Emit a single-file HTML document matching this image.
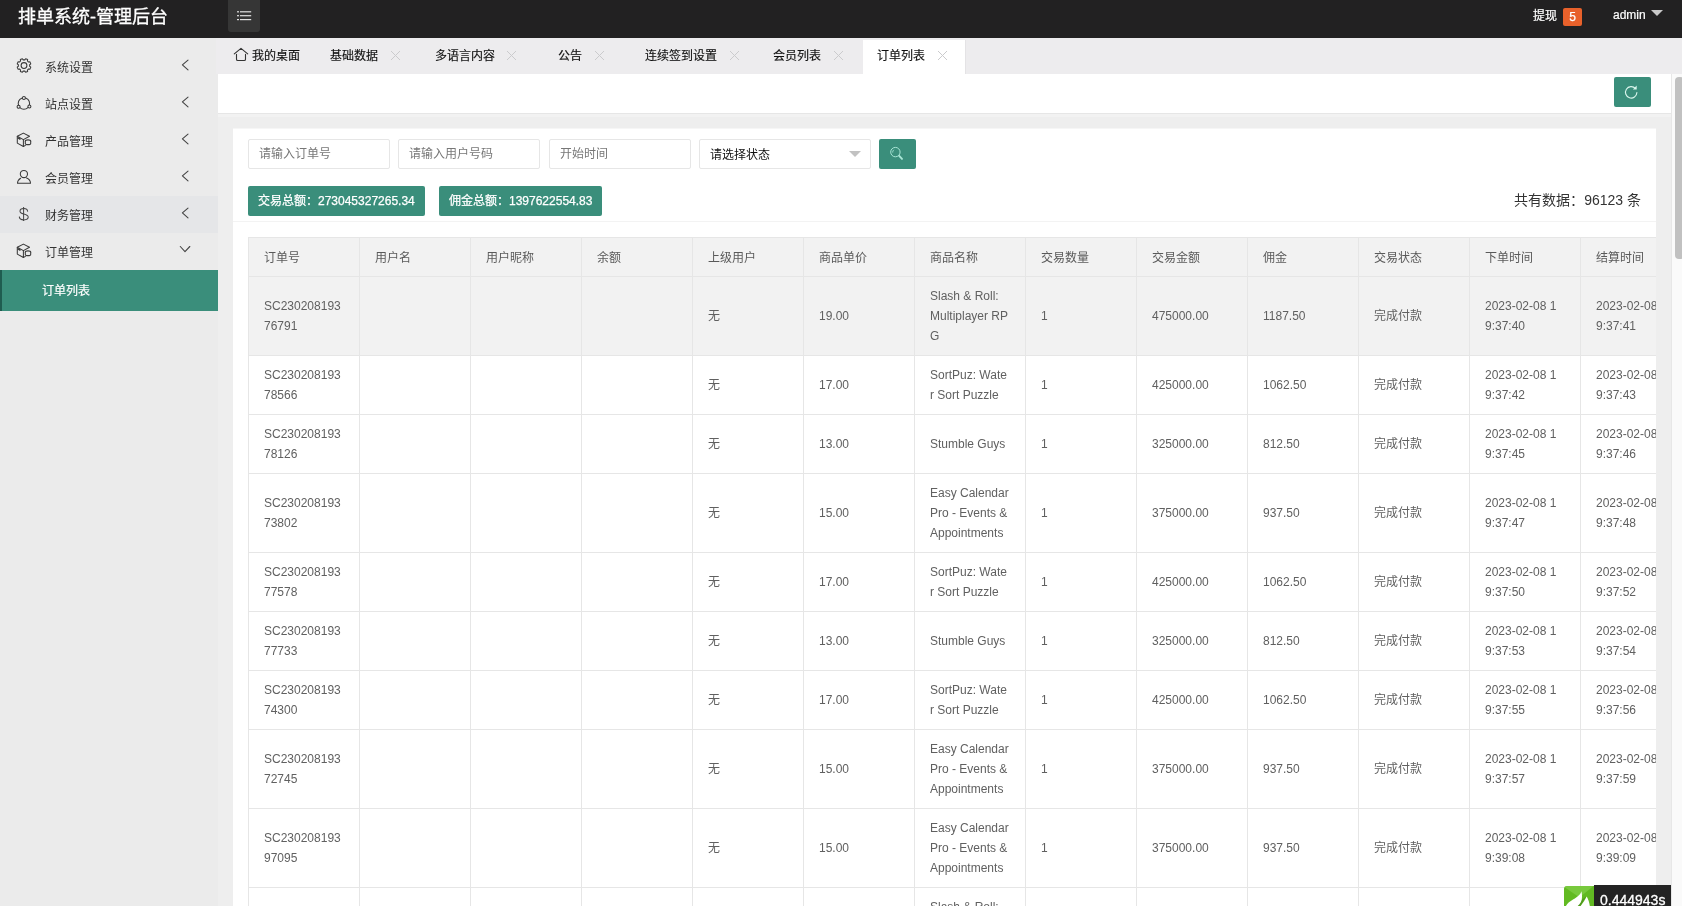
<!DOCTYPE html>
<html lang="zh-CN">
<head>
<meta charset="utf-8">
<title>排单系统-管理后台</title>
<style>
*{box-sizing:border-box;margin:0;padding:0}
html,body{width:1682px;height:906px;overflow:hidden}
body{position:relative;background:#eee;font-family:"Liberation Sans",sans-serif;font-size:12px;color:#333;-webkit-font-smoothing:antialiased}
#root{position:absolute;left:0;top:0;width:1682px;height:906px;overflow:hidden;will-change:transform;background:#eee}
.abs{position:absolute}
/* header */
#hd{position:absolute;left:0;top:0;width:1682px;height:38px;background:#222122}
#logo{-webkit-text-stroke:.3px #fff;position:absolute;left:18px;top:1px;height:32px;line-height:32px;font-size:18px;color:#fff;white-space:nowrap;width:160px}
#tog{position:absolute;left:228px;top:0;width:32px;height:32px;background:#363636;border-radius:0 0 3px 3px}
#tx{-webkit-text-stroke:.2px #fff;position:absolute;left:1533px;top:4px;width:24px;height:24px;line-height:24px;color:#fff;font-size:12px;white-space:nowrap}
#bdg{-webkit-text-stroke:.25px #fff;position:absolute;left:1563px;top:8px;width:19px;height:18px;line-height:18px;background:#e8612b;color:#fff;border-radius:2px;text-align:center;font-size:12px}
#adm{-webkit-text-stroke:.2px #fff;position:absolute;left:1613px;top:3px;height:24px;line-height:24px;color:#fff;font-size:12px}
#tri{position:absolute;left:1651px;top:10px;width:0;height:0;border:6px solid transparent;border-top-color:#c9c9c9;border-bottom-width:0}
/* sidebar */
#sb{position:absolute;left:0;top:38px;width:218px;height:868px;background:#ebebeb}
.mi{position:absolute;left:0;width:218px;height:37px}
.mi .t{position:absolute;left:45px;top:2px;height:37px;line-height:37px;width:60px;white-space:nowrap;color:#333;font-size:12px}
.mi svg{position:absolute}
.mi.hov{background:#e5e6e8}
#sub{position:absolute;left:0;top:232px;width:218px;height:41px;background:#3a8e7b;border-left:2px solid #1f5c50}
#sub span{-webkit-text-stroke:.2px #fff;position:absolute;left:40px;top:1px;line-height:41px;color:#fff;font-size:12px;white-space:nowrap;width:60px}
/* tabs */
#tabs{position:absolute;left:218px;top:38px;width:1464px;height:36px;background:#edecee;box-shadow:-2px 0 0 #edecee}
.tb{-webkit-text-stroke:.15px #111;position:absolute;top:2px;height:34px;line-height:32px;font-size:12px;color:#111;white-space:nowrap}
.tb .x{position:absolute;top:12px}
#act{position:absolute;left:645px;top:2px;width:103px;height:34px;background:#fff;border-right:1px solid #e4e3e5}
/* nav strip */
#nav{position:absolute;left:218px;top:74px;width:1453px;height:40px;background:#fff;border-bottom:1px solid #e6e6e6}#nsh{position:absolute;left:218px;top:114px;width:1453px;height:3px;background:#f2f2f2}
.gbtn{-webkit-text-stroke:.25px #fff;position:absolute;background:#3a8e7b;border-radius:2px;color:#fff;font-size:12px;height:30px;line-height:30px;white-space:nowrap;overflow:hidden}
/* scrollbar */
#sc{position:absolute;left:1671px;top:74px;width:11px;height:832px;background:#fafafa;border-left:1px solid #e7e7e7}
#th{position:absolute;left:1675px;top:77px;width:9px;height:182px;background:#c1c1c1;border-radius:4px}
/* card */
#card{position:absolute;left:233px;top:128px;width:1423px;height:790px;background:#fff;overflow:hidden;border-top:1px solid #f6f6f6}
.inp{position:absolute;top:10px;height:30px;border:1px solid #e6e6e6;border-radius:2px;background:#fff;line-height:28px;padding-left:10px;font-size:12px;color:#777;white-space:nowrap;overflow:hidden}
#hr{position:absolute;left:0;top:92px;width:1423px;height:1px;background:#f3f3f3}
#tot{position:absolute;right:15px;top:61px;width:140px;text-align:right;font-size:14px;line-height:20px;color:#333;white-space:nowrap}
table{position:absolute;left:15px;top:108px;border-collapse:collapse;table-layout:fixed;width:1555px}
th,td{width:111px;border:1px solid #e6e6e6;padding:9px 15px;font-size:12px;line-height:20px;font-weight:normal;text-align:left;color:#606060;white-space:nowrap;vertical-align:middle;overflow:hidden}
th{background:#f2f2f2;color:#5a5a5a;padding:10px 15px 8px}
tr.h td{background:#f2f2f2}
/* trace */
#tp{-webkit-text-stroke:.3px #fff;position:absolute;left:1594px;top:885px;width:77px;height:30px;background:#232323;color:#fff;font-size:14px;line-height:30px;padding-left:6px;white-space:nowrap}
#tpl{position:absolute;left:1564px;top:886px;width:30px;height:30px}
</style>
</head>
<body>
<div id="root">
<div id="hd">
  <div id="logo">排单系统-管理后台</div>
  <div id="tog"><svg width="32" height="32" viewBox="0 0 32 32"><g fill="#e0e0e0"><rect x="9" y="11.2" width="2" height="1.2"/><rect x="12" y="11.2" width="11.2" height="1.2"/><rect x="9" y="15.1" width="2" height="1.2"/><rect x="12" y="15.1" width="11.2" height="1.2"/><rect x="9" y="19" width="2" height="1.2"/><rect x="12" y="19" width="11.2" height="1.2"/></g></svg></div>
  <div id="tx">提现</div><div id="bdg">5</div>
  <div id="adm">admin</div><div id="tri"></div>
</div>
<div id="sb">
  <div class="mi" style="top:10px"><svg style="left:16px;top:9px" width="16" height="17" viewBox="0 0 16 17"><path d="M8.80 2.86 L9.63 1.69 L11.66 2.53 L11.42 3.94 L12.56 5.08 L13.97 4.84 L14.81 6.87 L13.64 7.70 L13.64 9.30 L14.81 10.13 L13.97 12.16 L12.56 11.92 L11.42 13.06 L11.66 14.47 L9.63 15.31 L8.80 14.14 L7.20 14.14 L6.37 15.31 L4.34 14.47 L4.58 13.06 L3.44 11.92 L2.03 12.16 L1.19 10.13 L2.36 9.30 L2.36 7.70 L1.19 6.87 L2.03 4.84 L3.44 5.08 L4.58 3.94 L4.34 2.53 L6.37 1.69 L7.20 2.86Z" fill="none" stroke="#3a3a3a" stroke-width="1.05" stroke-linejoin="round" stroke-linecap="round"/><circle cx="8" cy="8.5" r="2.9" fill="none" stroke="#3a3a3a" stroke-width="1.05" stroke-linejoin="round" stroke-linecap="round"/></svg><span class="t">系统设置</span><svg style="left:181px;top:11px" width="8" height="12" viewBox="0 0 8 12"><path d="M7 1.1L1.4 5.9L7 10.8" fill="none" stroke="#444" stroke-width="1.1" stroke-linecap="round" stroke-linejoin="round"/></svg></div>
  <div class="mi" style="top:47px"><svg style="left:16px;top:10px" width="16" height="16" viewBox="0 0 16 16.0"><circle cx="7.9" cy="8.5" r="5.7" fill="none" stroke="#3a3a3a" stroke-width="1.05" stroke-linejoin="round" stroke-linecap="round"/><circle cx="7.9" cy="2.9" r="1.5" fill="#ebebeb" stroke="#3a3a3a" stroke-width="1.05"/><circle cx="2.6" cy="11.7" r="1.5" fill="#ebebeb" stroke="#3a3a3a" stroke-width="1.05"/><circle cx="13.4" cy="11.5" r="1.5" fill="#ebebeb" stroke="#3a3a3a" stroke-width="1.05"/></svg><span class="t">站点设置</span><svg style="left:181px;top:11px" width="8" height="12" viewBox="0 0 8 12"><path d="M7 1.1L1.4 5.9L7 10.8" fill="none" stroke="#444" stroke-width="1.1" stroke-linecap="round" stroke-linejoin="round"/></svg></div>
  <div class="mi" style="top:84px"><svg style="left:16px;top:10px" width="16" height="16" viewBox="0 0 16 16"><path d="M7.4 1.1L13.5 4.3L7.4 7.6L1.3 4.3Z" fill="none" stroke="#3a3a3a" stroke-width="1.05" stroke-linejoin="round" stroke-linecap="round"/><path d="M1.3 4.3V11.1L7.4 14.5V7.6" fill="none" stroke="#3a3a3a" stroke-width="1.05" stroke-linejoin="round" stroke-linecap="round"/><path d="M1.6 5.6L4.5 7.4" fill="none" stroke="#3a3a3a" stroke-width="1.6"/><path d="M7.4 14.5L9.4 13.4" fill="none" stroke="#3a3a3a" stroke-width="1.05" stroke-linejoin="round" stroke-linecap="round"/><ellipse cx="12" cy="9.1" rx="2.7" ry="1.25" fill="#ebebeb" stroke="#3a3a3a" stroke-width="1.05"/><path d="M9.3 9.1V11.4A2.7 1.25 0 0 0 14.7 11.4V9.1" fill="#ebebeb" stroke="#3a3a3a" stroke-width="1.05"/></svg><span class="t">产品管理</span><svg style="left:181px;top:11px" width="8" height="12" viewBox="0 0 8 12"><path d="M7 1.1L1.4 5.9L7 10.8" fill="none" stroke="#444" stroke-width="1.1" stroke-linecap="round" stroke-linejoin="round"/></svg></div>
  <div class="mi" style="top:121px"><svg style="left:16px;top:10px" width="16" height="16" viewBox="0 0 16 16"><circle cx="7.9" cy="5" r="3.6" fill="none" stroke="#3a3a3a" stroke-width="1.05" stroke-linejoin="round" stroke-linecap="round"/><path d="M4.6 9.2C2.6 10.4 1.5 12.2 1.5 14.3H14.5C14.5 12 13.2 10 10.6 8.9" fill="none" stroke="#3a3a3a" stroke-width="1.05" stroke-linejoin="round" stroke-linecap="round"/></svg><span class="t">会员管理</span><svg style="left:181px;top:11px" width="8" height="12" viewBox="0 0 8 12"><path d="M7 1.1L1.4 5.9L7 10.8" fill="none" stroke="#444" stroke-width="1.1" stroke-linecap="round" stroke-linejoin="round"/></svg></div>
  <div class="mi hov" style="top:158px"><svg style="left:16px;top:10px" width="16" height="16" viewBox="0 0 16 16"><path d="M7.6 1V15" fill="none" stroke="#444" stroke-width="1"/><path d="M11.6 5.2C11.4 3.4 9.8 2.4 7.8 2.4C5.6 2.4 4 3.5 4 5.2C4 6.9 5.6 7.5 7.8 8C10.2 8.6 12.2 9.2 12.2 11.1C12.2 12.9 10.3 13.9 7.8 13.9C5.4 13.9 3.5 12.8 3.3 10.9" fill="none" stroke="#444" stroke-width="1.05" stroke-linecap="round"/></svg><span class="t">财务管理</span><svg style="left:181px;top:11px" width="8" height="12" viewBox="0 0 8 12"><path d="M7 1.1L1.4 5.9L7 10.8" fill="none" stroke="#444" stroke-width="1.1" stroke-linecap="round" stroke-linejoin="round"/></svg></div>
  <div class="mi" style="top:195px"><svg style="left:16px;top:10px" width="16" height="16" viewBox="0 0 16 16"><path d="M7.4 1.1L13.5 4.3L7.4 7.6L1.3 4.3Z" fill="none" stroke="#3a3a3a" stroke-width="1.05" stroke-linejoin="round" stroke-linecap="round"/><path d="M1.3 4.3V11.1L7.4 14.5V7.6" fill="none" stroke="#3a3a3a" stroke-width="1.05" stroke-linejoin="round" stroke-linecap="round"/><path d="M1.6 5.6L4.5 7.4" fill="none" stroke="#3a3a3a" stroke-width="1.6"/><path d="M7.4 14.5L9.4 13.4" fill="none" stroke="#3a3a3a" stroke-width="1.05" stroke-linejoin="round" stroke-linecap="round"/><ellipse cx="12" cy="9.1" rx="2.7" ry="1.25" fill="#ebebeb" stroke="#3a3a3a" stroke-width="1.05"/><path d="M9.3 9.1V11.4A2.7 1.25 0 0 0 14.7 11.4V9.1" fill="#ebebeb" stroke="#3a3a3a" stroke-width="1.05"/></svg><span class="t">订单管理</span><svg style="left:179px;top:12px" width="12" height="8" viewBox="0 0 12 8"><path d="M1.3 1.5L6 6.6L10.8 1.5" fill="none" stroke="#444" stroke-width="1.1" stroke-linecap="round" stroke-linejoin="round"/></svg></div>
  <div id="sub"><span>订单列表</span></div>
</div>
<div id="tabs">
  <div id="act"></div>
  <svg class="abs" style="left:14.5px;top:9px" width="16" height="15" viewBox="0 0 16 15"><path d="M1.3 6.9L8 1.3L14.7 6.9" fill="none" stroke="#333" stroke-width="1.1" stroke-linecap="round" stroke-linejoin="round"/><path d="M3.5 7.4V12.2Q3.5 13.5 4.8 13.5H11.2Q12.5 13.5 12.5 12.2V7.4" fill="none" stroke="#333" stroke-width="1.1" stroke-linecap="round"/></svg>
  <div class="tb" style="left:34px;width:50px">我的桌面</div><div class="tb" style="left:112px;width:50px">基础数据</div><svg class="abs" style="left:172px;top:12px" width="11" height="11" viewBox="0 0 11 11"><path d="M1 1L10 10M10 1L1 10" stroke="#cbcbcd" stroke-width="1" fill="none"/></svg><div class="tb" style="left:217px;width:62px">多语言内容</div><svg class="abs" style="left:288px;top:12px" width="11" height="11" viewBox="0 0 11 11"><path d="M1 1L10 10M10 1L1 10" stroke="#cbcbcd" stroke-width="1" fill="none"/></svg><div class="tb" style="left:340px;width:26px">公告</div><svg class="abs" style="left:376px;top:12px" width="11" height="11" viewBox="0 0 11 11"><path d="M1 1L10 10M10 1L1 10" stroke="#cbcbcd" stroke-width="1" fill="none"/></svg><div class="tb" style="left:427px;width:74px">连续签到设置</div><svg class="abs" style="left:511px;top:12px" width="11" height="11" viewBox="0 0 11 11"><path d="M1 1L10 10M10 1L1 10" stroke="#cbcbcd" stroke-width="1" fill="none"/></svg><div class="tb" style="left:555px;width:50px">会员列表</div><svg class="abs" style="left:615px;top:12px" width="11" height="11" viewBox="0 0 11 11"><path d="M1 1L10 10M10 1L1 10" stroke="#cbcbcd" stroke-width="1" fill="none"/></svg><div class="tb" style="left:659px;width:50px">订单列表</div><svg class="abs" style="left:719px;top:12px" width="11" height="11" viewBox="0 0 11 11"><path d="M1 1L10 10M10 1L1 10" stroke="#cbcbcd" stroke-width="1" fill="none"/></svg>
</div>
<div id="nav"><div class="gbtn" style="left:1396px;top:3px;width:37px"><svg class="abs" style="left:8px;top:6px" width="18" height="18" viewBox="0 0 18 18"><path d="M13.4 5.5A5.7 5.7 0 1 0 14.9 9.6" fill="none" stroke="#d9f5ec" stroke-width="1.15" stroke-linecap="round"/><path d="M14.7 2.6V6.4H10.9Z" fill="#d9f5ec"/></svg></div></div>
<div id="nsh"></div><div id="sc"></div><div id="th"></div>
<div id="card">
  <div class="inp" style="left:15px;width:142px">请输入订单号</div>
  <div class="inp" style="left:165px;width:142px">请输入用户号码</div>
  <div class="inp" style="left:316px;width:142px">开始时间</div>
  <div class="inp" style="left:466px;width:172px;color:#111;line-height:30px">请选择状态<i class="abs" style="right:9px;top:11px;width:0;height:0;border:6px solid transparent;border-top-color:#c2c2c2;border-bottom-width:0"></i></div>
  <div class="gbtn" style="left:646px;top:10px;width:37px"><svg class="abs" style="left:9px;top:6px" width="18" height="18" viewBox="0 0 18 18"><circle cx="7.4" cy="7.1" r="4.7" fill="none" stroke="#a9e6d6" stroke-width="1"/><path d="M4.7 7.6A2.8 2.8 0 0 1 5.9 4.8" fill="none" stroke="#a9e6d6" stroke-width="0.8"/><path d="M11.2 10.9L14 13.9" fill="none" stroke="#a9e6d6" stroke-width="1.9" stroke-linecap="round"/></svg></div>
  <div class="gbtn" style="left:15px;top:57px;width:177px;padding-left:10px">交易总额：273045327265.34</div>
  <div class="gbtn" style="left:206px;top:57px;width:163px;padding-left:10px">佣金总额：1397622554.83</div>
  <div id="tot">共有数据：96123 条</div>
  <div id="hr"></div>
  <table>
  <tr><th>订单号</th><th>用户名</th><th>用户昵称</th><th>余额</th><th>上级用户</th><th>商品单价</th><th>商品名称</th><th>交易数量</th><th>交易金额</th><th>佣金</th><th>交易状态</th><th>下单时间</th><th>结算时间</th><th></th></tr>
  <tr class="h"><td>SC230208193<br>76791</td><td></td><td></td><td></td><td>无</td><td>19.00</td><td>Slash &amp; Roll:<br>Multiplayer RP<br>G</td><td>1</td><td>475000.00</td><td>1187.50</td><td>完成付款</td><td>2023-02-08 1<br>9:37:40</td><td>2023-02-08 1<br>9:37:41</td><td></td></tr>
  <tr><td>SC230208193<br>78566</td><td></td><td></td><td></td><td>无</td><td>17.00</td><td>SortPuz: Wate<br>r Sort Puzzle</td><td>1</td><td>425000.00</td><td>1062.50</td><td>完成付款</td><td>2023-02-08 1<br>9:37:42</td><td>2023-02-08 1<br>9:37:43</td><td></td></tr>
  <tr><td>SC230208193<br>78126</td><td></td><td></td><td></td><td>无</td><td>13.00</td><td>Stumble Guys</td><td>1</td><td>325000.00</td><td>812.50</td><td>完成付款</td><td>2023-02-08 1<br>9:37:45</td><td>2023-02-08 1<br>9:37:46</td><td></td></tr>
  <tr><td>SC230208193<br>73802</td><td></td><td></td><td></td><td>无</td><td>15.00</td><td>Easy Calendar<br>Pro - Events &amp;<br>Appointments</td><td>1</td><td>375000.00</td><td>937.50</td><td>完成付款</td><td>2023-02-08 1<br>9:37:47</td><td>2023-02-08 1<br>9:37:48</td><td></td></tr>
  <tr><td>SC230208193<br>77578</td><td></td><td></td><td></td><td>无</td><td>17.00</td><td>SortPuz: Wate<br>r Sort Puzzle</td><td>1</td><td>425000.00</td><td>1062.50</td><td>完成付款</td><td>2023-02-08 1<br>9:37:50</td><td>2023-02-08 1<br>9:37:52</td><td></td></tr>
  <tr><td>SC230208193<br>77733</td><td></td><td></td><td></td><td>无</td><td>13.00</td><td>Stumble Guys</td><td>1</td><td>325000.00</td><td>812.50</td><td>完成付款</td><td>2023-02-08 1<br>9:37:53</td><td>2023-02-08 1<br>9:37:54</td><td></td></tr>
  <tr><td>SC230208193<br>74300</td><td></td><td></td><td></td><td>无</td><td>17.00</td><td>SortPuz: Wate<br>r Sort Puzzle</td><td>1</td><td>425000.00</td><td>1062.50</td><td>完成付款</td><td>2023-02-08 1<br>9:37:55</td><td>2023-02-08 1<br>9:37:56</td><td></td></tr>
  <tr><td>SC230208193<br>72745</td><td></td><td></td><td></td><td>无</td><td>15.00</td><td>Easy Calendar<br>Pro - Events &amp;<br>Appointments</td><td>1</td><td>375000.00</td><td>937.50</td><td>完成付款</td><td>2023-02-08 1<br>9:37:57</td><td>2023-02-08 1<br>9:37:59</td><td></td></tr>
  <tr><td>SC230208193<br>97095</td><td></td><td></td><td></td><td>无</td><td>15.00</td><td>Easy Calendar<br>Pro - Events &amp;<br>Appointments</td><td>1</td><td>375000.00</td><td>937.50</td><td>完成付款</td><td>2023-02-08 1<br>9:39:08</td><td>2023-02-08 1<br>9:39:09</td><td></td></tr>
  <tr><td>SC230208193<br>90385</td><td></td><td></td><td></td><td>无</td><td>19.00</td><td>Slash &amp; Roll:<br>Multiplayer RP<br>G</td><td>1</td><td>475000.00</td><td>1187.50</td><td>完成付款</td><td>2023-02-08 1<br>9:39:10</td><td>2023-02-08 1<br>9:39:11</td><td></td></tr>
  </table>
</div>
<div id="tpl"><svg width="30" height="30" viewBox="0 0 30 30"><path d="M3 0H30V30H0V3Q0 0 3 0Z" fill="#62ba22"/><path d="M1 1.5Q1.5 .3 3 0H29.5L15.5 11.5Z" fill="#8ad653" opacity=".55"/><path d="M7.5 21C13 17 18 14 22.2 10.3L16 21Z" fill="#4f9a1c"/><path d="M17.4 5.2C16.6 8.6 13 11.2 9 13.6C5.5 15.7 2.6 18 1.2 21.5H11.8C16 18.5 19.6 14.5 17.4 5.2Z" fill="#fff"/><path d="M22.7 10.4C21 14 18.5 17.5 15.5 21.5H26C25.6 17 24.6 13.5 22.7 10.4Z" fill="#fff"/></svg></div>
<div id="tp">0.444943s</div>
</div>
</body>
</html>
